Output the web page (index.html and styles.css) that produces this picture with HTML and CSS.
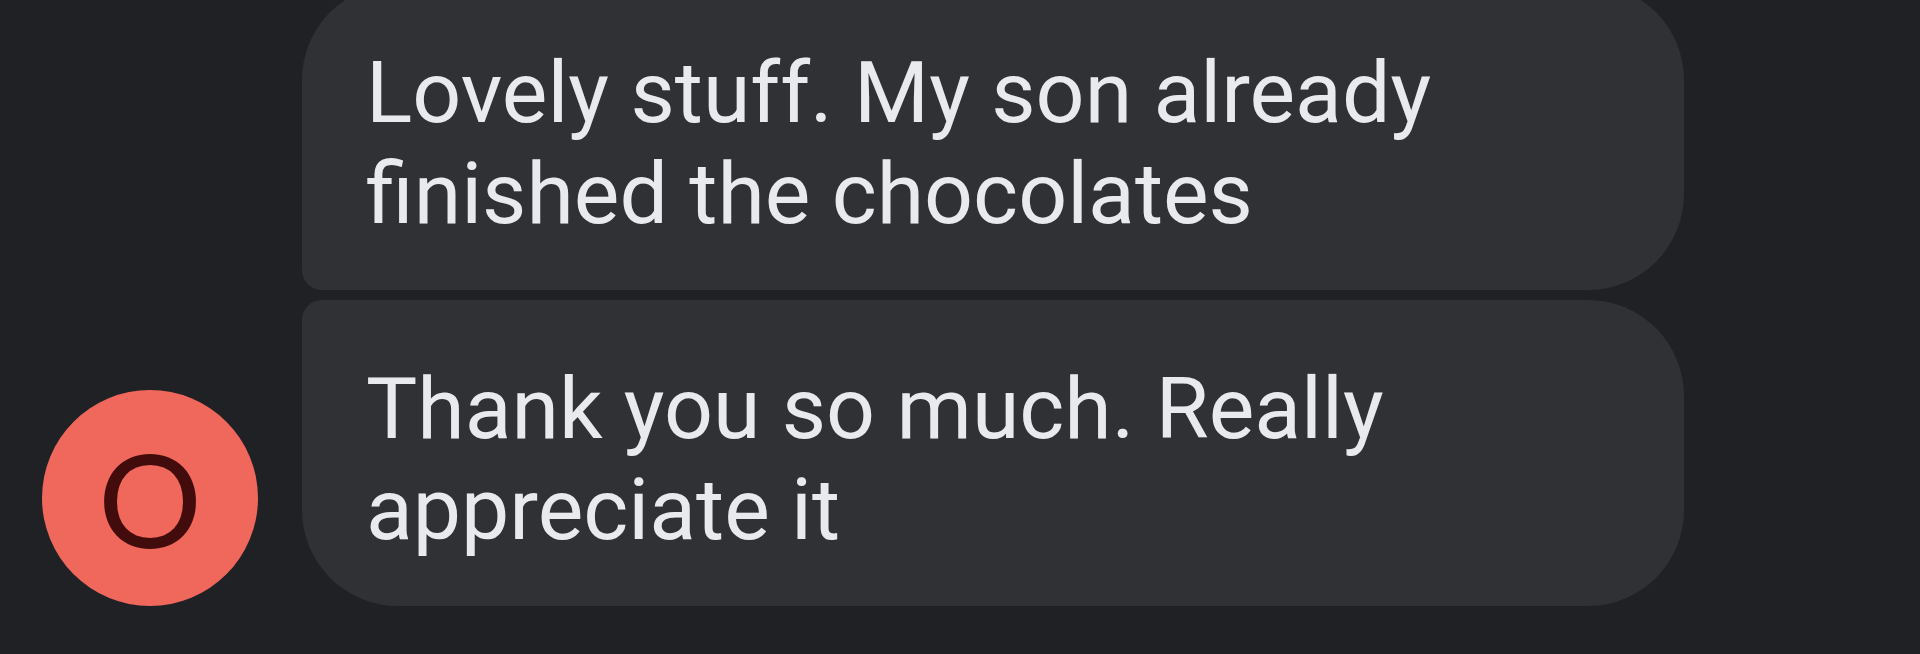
FILE: index.html
```
<!DOCTYPE html>
<html lang="en">

<head>
    <meta charset="utf-8">
    <meta name="viewport" content="width=device-width, initial-scale=1.0">
    <title>Messages</title>
    <link rel="stylesheet" href="styles.css">
</head>

<body>
    <main class="chat">
        <div class="avatar">O</div>
        <div class="messages">
            <p class="message message--first">Lovely stuff. My son already finished the chocolates</p>
            <p class="message message--last">Thank you so much. Really appreciate it</p>
        </div>
    </main>
</body>

</html>
```

FILE: styles.css
```
body {
    --color-background: #202125;
    --color-bubble: #303135;
    --color-text: #e8eaed;
    --color-avatar: #f0675c;
    --color-initial: #420c0c;
    --radius-large: 96px;
    --radius-small: 20px;
    margin: 0;
    background: var(--color-background);
    color: var(--color-text);
    font-family: Roboto, sans-serif;
}

/* the thread is scrolled a little past the top of the first bubble */
.chat {
    display: flex;
    align-items: flex-end;
    gap: 44px;
    margin-top: -16px;
    padding: 0 236px 48px 42px;
}

.avatar {
    display: flex;
    flex: none;
    align-items: center;
    justify-content: center;
    width: 216px;
    height: 216px;
    border-radius: 50%;
    background: var(--color-avatar);
    color: var(--color-initial);
    font-family: Lato, sans-serif;
    font-size: 130px;
    line-height: 1;
}

.messages {
    display: flex;
    flex: 1;
    flex-direction: column;
    gap: 10px;
}

.message {
    margin: 0;
    padding: 58px 64px 46px;
    background: var(--color-bubble);
    font-size: 86px;
    line-height: 101px;
}

.message--first {
    border-radius: var(--radius-large) var(--radius-large) var(--radius-large) var(--radius-small);
}

.message--last {
    border-radius: var(--radius-small) var(--radius-large) var(--radius-large) var(--radius-large);
}
```
